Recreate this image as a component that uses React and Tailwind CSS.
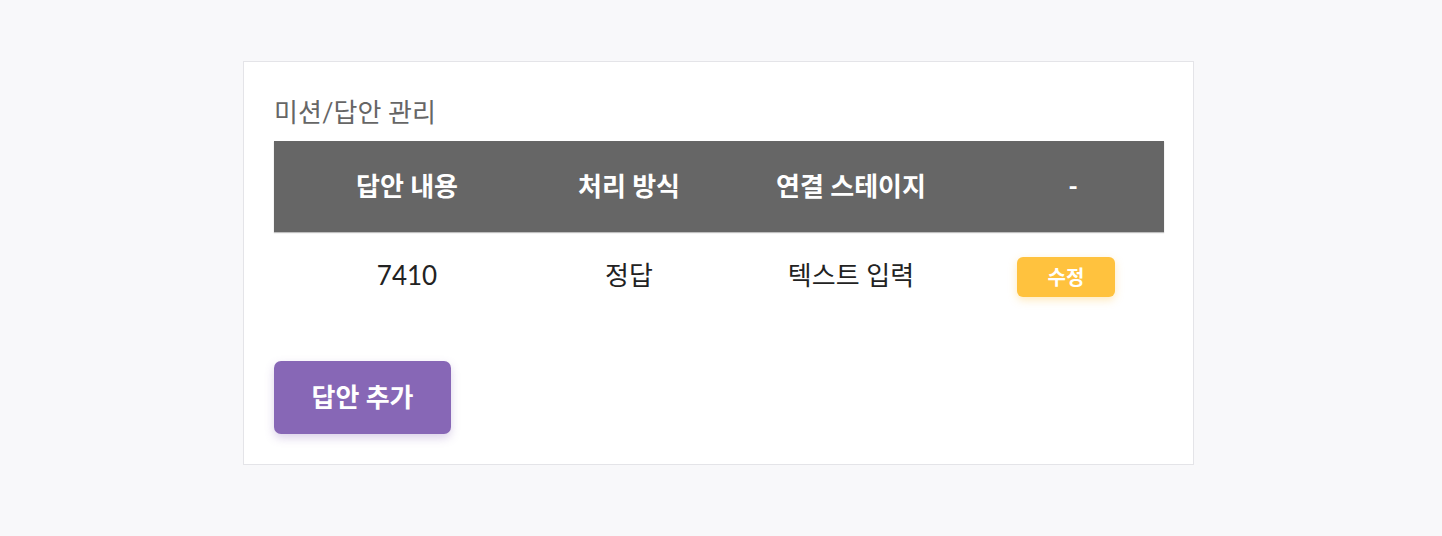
import React from 'react';

const font = { fontFamily: "Lato, 'Noto Sans CJK KR', sans-serif" };

const columns = ['답안 내용', '처리 방식', '연결 스테이지', '-'];

const answers = [{ id: 1, content: '7410', type: '정답', stage: '텍스트 입력' }];

const App = () => {
  return (
    <div className="min-h-screen bg-[#f8f8fa] pt-[61px]" style={font}>
      <div className="ml-[243px] w-[951px] h-[404px] bg-white border border-[#e4e4e8] pt-[35px] pl-[30px] pr-[29px]">
        <h2 className="text-[26px] leading-[30px] text-[#666] font-normal">미션/답안 관리</h2>

        <div className="mt-[14px]">
          <div className="h-[91px] bg-[#666] grid grid-cols-[222px_222px_222px_1fr] pl-[22px] items-center shadow-[0_1px_1px_rgba(0,0,0,0.25)]">
            {columns.map((col, i) => (
              <div
                key={col}
                className={`text-center text-white text-[26px] font-bold ${i === 3 ? 'pl-[20px]' : ''}`}
              >
                {col}
              </div>
            ))}
          </div>

          {answers.map((a) => (
            <div key={a.id} className="h-[86px] grid grid-cols-[222px_222px_222px_1fr] pl-[22px] items-center text-[#222] text-[26px]">
              <div className="text-center">{a.content}</div>
              <div className="text-center">{a.type}</div>
              <div className="text-center">{a.stage}</div>
              <div className="flex justify-center pl-[6px] pt-[4px]">
                <button className="w-[98px] h-[40px] rounded-[6px] bg-[#ffc23e] text-white text-[20px] font-bold shadow-[0_3px_8px_rgba(255,193,62,0.35)]">
                  수정
                </button>
              </div>
            </div>
          ))}
        </div>

        <button className="mt-[43px] w-[177px] h-[73px] rounded-[7px] bg-[#8767b6] text-white text-[26px] font-bold shadow-[0_4px_10px_rgba(135,103,182,0.3)]">
          답안 추가
        </button>
      </div>
    </div>
  );
};

export default App;
